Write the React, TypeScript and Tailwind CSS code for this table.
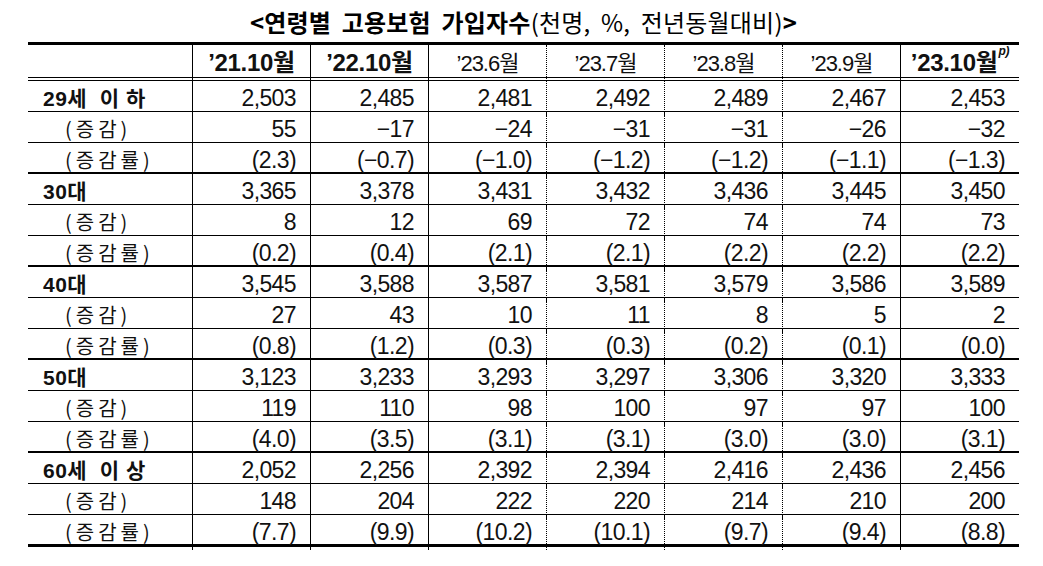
import React from "react";

const headers: { t: string; bold: boolean; sup?: boolean }[] = [
  { t: "\u201921.10월", bold: true },
  { t: "\u201922.10월", bold: true },
  { t: "\u201923.6월", bold: false },
  { t: "\u201923.7월", bold: false },
  { t: "\u201923.8월", bold: false },
  { t: "\u201923.9월", bold: false },
  { t: "\u201923.10월", bold: true, sup: true },
];

const groups: { label: string; rows: string[][] }[] = [
  {
    label: "29세  이 하",
    rows: [
      ["2,503", "2,485", "2,481", "2,492", "2,489", "2,467", "2,453"],
      ["55", "−17", "−24", "−31", "−31", "−26", "−32"],
      ["(2.3)", "(−0.7)", "(−1.0)", "(−1.2)", "(−1.2)", "(−1.1)", "(−1.3)"],
    ],
  },
  {
    label: "30대",
    rows: [
      ["3,365", "3,378", "3,431", "3,432", "3,436", "3,445", "3,450"],
      ["8", "12", "69", "72", "74", "74", "73"],
      ["(0.2)", "(0.4)", "(2.1)", "(2.1)", "(2.2)", "(2.2)", "(2.2)"],
    ],
  },
  {
    label: "40대",
    rows: [
      ["3,545", "3,588", "3,587", "3,581", "3,579", "3,586", "3,589"],
      ["27", "43", "10", "11", "8", "5", "2"],
      ["(0.8)", "(1.2)", "(0.3)", "(0.3)", "(0.2)", "(0.1)", "(0.0)"],
    ],
  },
  {
    label: "50대",
    rows: [
      ["3,123", "3,233", "3,293", "3,297", "3,306", "3,320", "3,333"],
      ["119", "110", "98", "100", "97", "97", "100"],
      ["(4.0)", "(3.5)", "(3.1)", "(3.1)", "(3.0)", "(3.0)", "(3.1)"],
    ],
  },
  {
    label: "60세  이 상",
    rows: [
      ["2,052", "2,256", "2,392", "2,394", "2,416", "2,436", "2,456"],
      ["148", "204", "222", "220", "214", "210", "200"],
      ["(7.7)", "(9.9)", "(10.2)", "(10.1)", "(9.7)", "(9.4)", "(8.8)"],
    ],
  },
];

const colBorder = [
  "border-l border-solid border-black",
  "border-l border-solid border-black",
  "border-l border-solid border-black",
  "border-l border-dotted border-black",
  "border-l border-dotted border-black",
  "border-l border-dotted border-black",
  "border-l border-solid border-black",
];

const gridCls = "grid grid-cols-[164px_118px_118px_118px_118px_118px_118px_119px]";

const font = { fontFamily: '"Liberation Sans", "Noto Sans CJK KR", sans-serif' };

export default function App() {
  return (
    <div className="w-[1043px] h-[566px] bg-white text-[#111]" style={font}>
      <div className="w-[1019px] pl-[28px]">
        <div
          className="h-[42px] flex items-center justify-center pt-[1px] text-[24px] text-black tracking-[0.2px] [word-spacing:5px]"
          style={{ fontFamily: '"Noto Sans CJK KR", sans-serif' }}
        >
          <span className="font-bold">&lt;연령별 고용보험 가입자수</span>
          <span>(천명, %, 전년동월대비)</span>
          <span className="font-bold">&gt;</span>
        </div>
        <div className="border-t-[3px] border-black">
          <div className={`${gridCls} h-[36px] border-b-4 border-double border-black`}>
            <div />
            {headers.map((h, i) => (
              <div
                key={i}
                className={`${colBorder[i]} flex items-center justify-center ${h.bold ? "text-[24px] font-bold tracking-[-0.3px]" : "text-[22px] tracking-[-1px]"}`}
              >
                <span>{h.t}</span>
                {h.sup && <sup className="text-[12px] italic font-bold -mt-[12px] ml-[1px]">p)</sup>}
              </div>
            ))}
          </div>
          {groups.map((g, gi) => (
            <div key={gi}>
              {g.rows.map((r, ri) => {
                const last = ri === 2;
                const lastGroup = gi === groups.length - 1;
                const rowCls = last
                  ? lastGroup
                    ? "h-[32px] border-b-[3px] border-black"
                    : "h-[31px] border-b-2 border-black"
                  : "h-[31px] border-b border-black";
                return (
                  <div key={ri} className={`${gridCls} ${rowCls}`}>
                    {ri === 0 ? (
                      <div className="flex items-center pl-[15px] text-[21px] font-bold tracking-[0.5px] whitespace-pre">
                        {g.label}
                      </div>
                    ) : (
                      <div
                        className="flex items-center pl-[37px] text-[20px] tracking-[4px] whitespace-pre"
                        style={{ fontFamily: '"Noto Sans CJK KR", sans-serif' }}
                      >
                        {ri === 1 ? "(증감)" : "(증감률)"}
                      </div>
                    )}
                    {r.map((v, ci) => (
                      <div
                        key={ci}
                        className={`${colBorder[ci]} flex items-center justify-end pr-[14px] text-[23px] tracking-[-0.6px]`}
                      >
                        {v}
                      </div>
                    ))}
                  </div>
                );
              })}
            </div>
          ))}
        </div>
      </div>
    </div>
  );
}
